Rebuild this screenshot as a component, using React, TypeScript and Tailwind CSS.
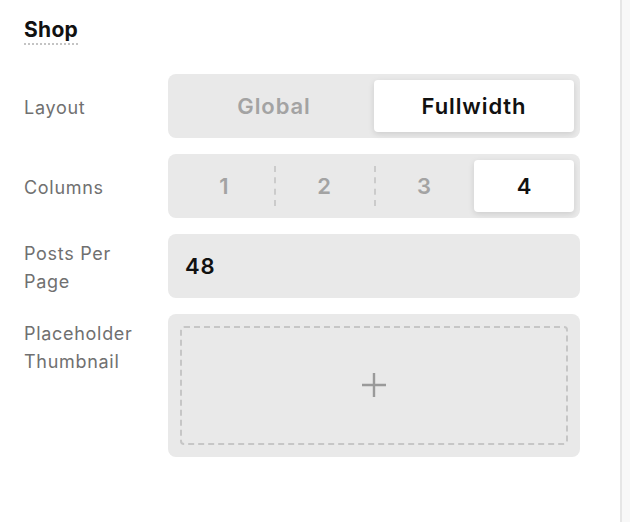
import React from "react";

function Label({ children }: { children: React.ReactNode }) {
  return (
    <div className="w-[144px] shrink-0 min-h-[64px] pt-1 flex items-center text-[18px] leading-[28px] tracking-[0.7px] text-[#707070]">
      <span>{children}</span>
    </div>
  );
}

export default function App() {
  const columns = ["1", "2", "3", "4"];
  return (
    <div className="flex w-[630px] h-[522px] bg-white font-['Inter',sans-serif]">
      {/* Panel */}
      <div className="w-[620px] shrink-0 pl-6 pt-[17px]">
        <div className="flex">
          <h2 className="text-[21px] leading-[25px] font-bold tracking-[0.3px] text-[#111] pb-[1px] border-b-2 border-dotted border-[#c4c4c4]">
            Shop
          </h2>
        </div>

        <div className="mt-[29px] flex flex-col gap-4">
          {/* Layout */}
          <div className="flex">
            <Label>Layout</Label>
            <div className="w-[412px] h-16 p-1.5 rounded-lg bg-[#e9e9e9] grid grid-cols-2">
              <button className="text-[22px] font-semibold tracking-[0.9px] text-[#a3a3a3]">Global</button>
              <button className="text-[22px] font-semibold tracking-[0.9px] text-[#111] bg-white rounded-[4px] shadow-[0_2px_6px_rgba(0,0,0,0.12)]">
                Fullwidth
              </button>
            </div>
          </div>

          {/* Columns */}
          <div className="flex">
            <Label>Columns</Label>
            <div className="w-[412px] h-16 p-1.5 rounded-lg bg-[#e9e9e9] grid grid-cols-4">
              {columns.map((c, i) => (
                <div key={c} className="relative flex">
                  {i > 0 && i < 3 && (
                    <span className="absolute left-0 top-1.5 bottom-1.5 border-l-2 border-dashed border-[#cbcbcb]" />
                  )}
                  {c === "4" ? (
                    <button className="flex-1 text-[22px] font-semibold text-[#111] bg-white rounded-[4px] shadow-[0_2px_6px_rgba(0,0,0,0.12)]">
                      {c}
                    </button>
                  ) : (
                    <button className="flex-1 text-[22px] font-semibold text-[#a3a3a3]">{c}</button>
                  )}
                </div>
              ))}
            </div>
          </div>

          {/* Posts per page */}
          <div className="flex">
            <Label>
              Posts Per
              <br />
              Page
            </Label>
            <div className="w-[412px] h-16 rounded-lg bg-[#e9e9e9] flex items-center pl-[17px] text-[22px] font-semibold tracking-[0.8px] text-[#111]">
              48
            </div>
          </div>

          {/* Placeholder thumbnail */}
          <div className="flex items-start">
            <Label>
              Placeholder
              <br />
              Thumbnail
            </Label>
            <div className="w-[412px] h-[143px] rounded-lg bg-[#e9e9e9] p-3 flex">
              <div className="flex-1 rounded-[4px] border-2 border-dashed border-[#c6c6c6] flex items-center justify-center">
                <svg width="24" height="24" viewBox="0 0 24 24" className="mt-[-2px]">
                  <path d="M12 0v24M0 12h24" stroke="#9a9a9a" strokeWidth="2.4" />
                </svg>
              </div>
            </div>
          </div>
        </div>
      </div>

      {/* Right edge */}
      <div className="w-0.5 bg-[#e6e6e6]" />
      <div className="flex-1 bg-[#f8f8f8]" />
    </div>
  );
}
